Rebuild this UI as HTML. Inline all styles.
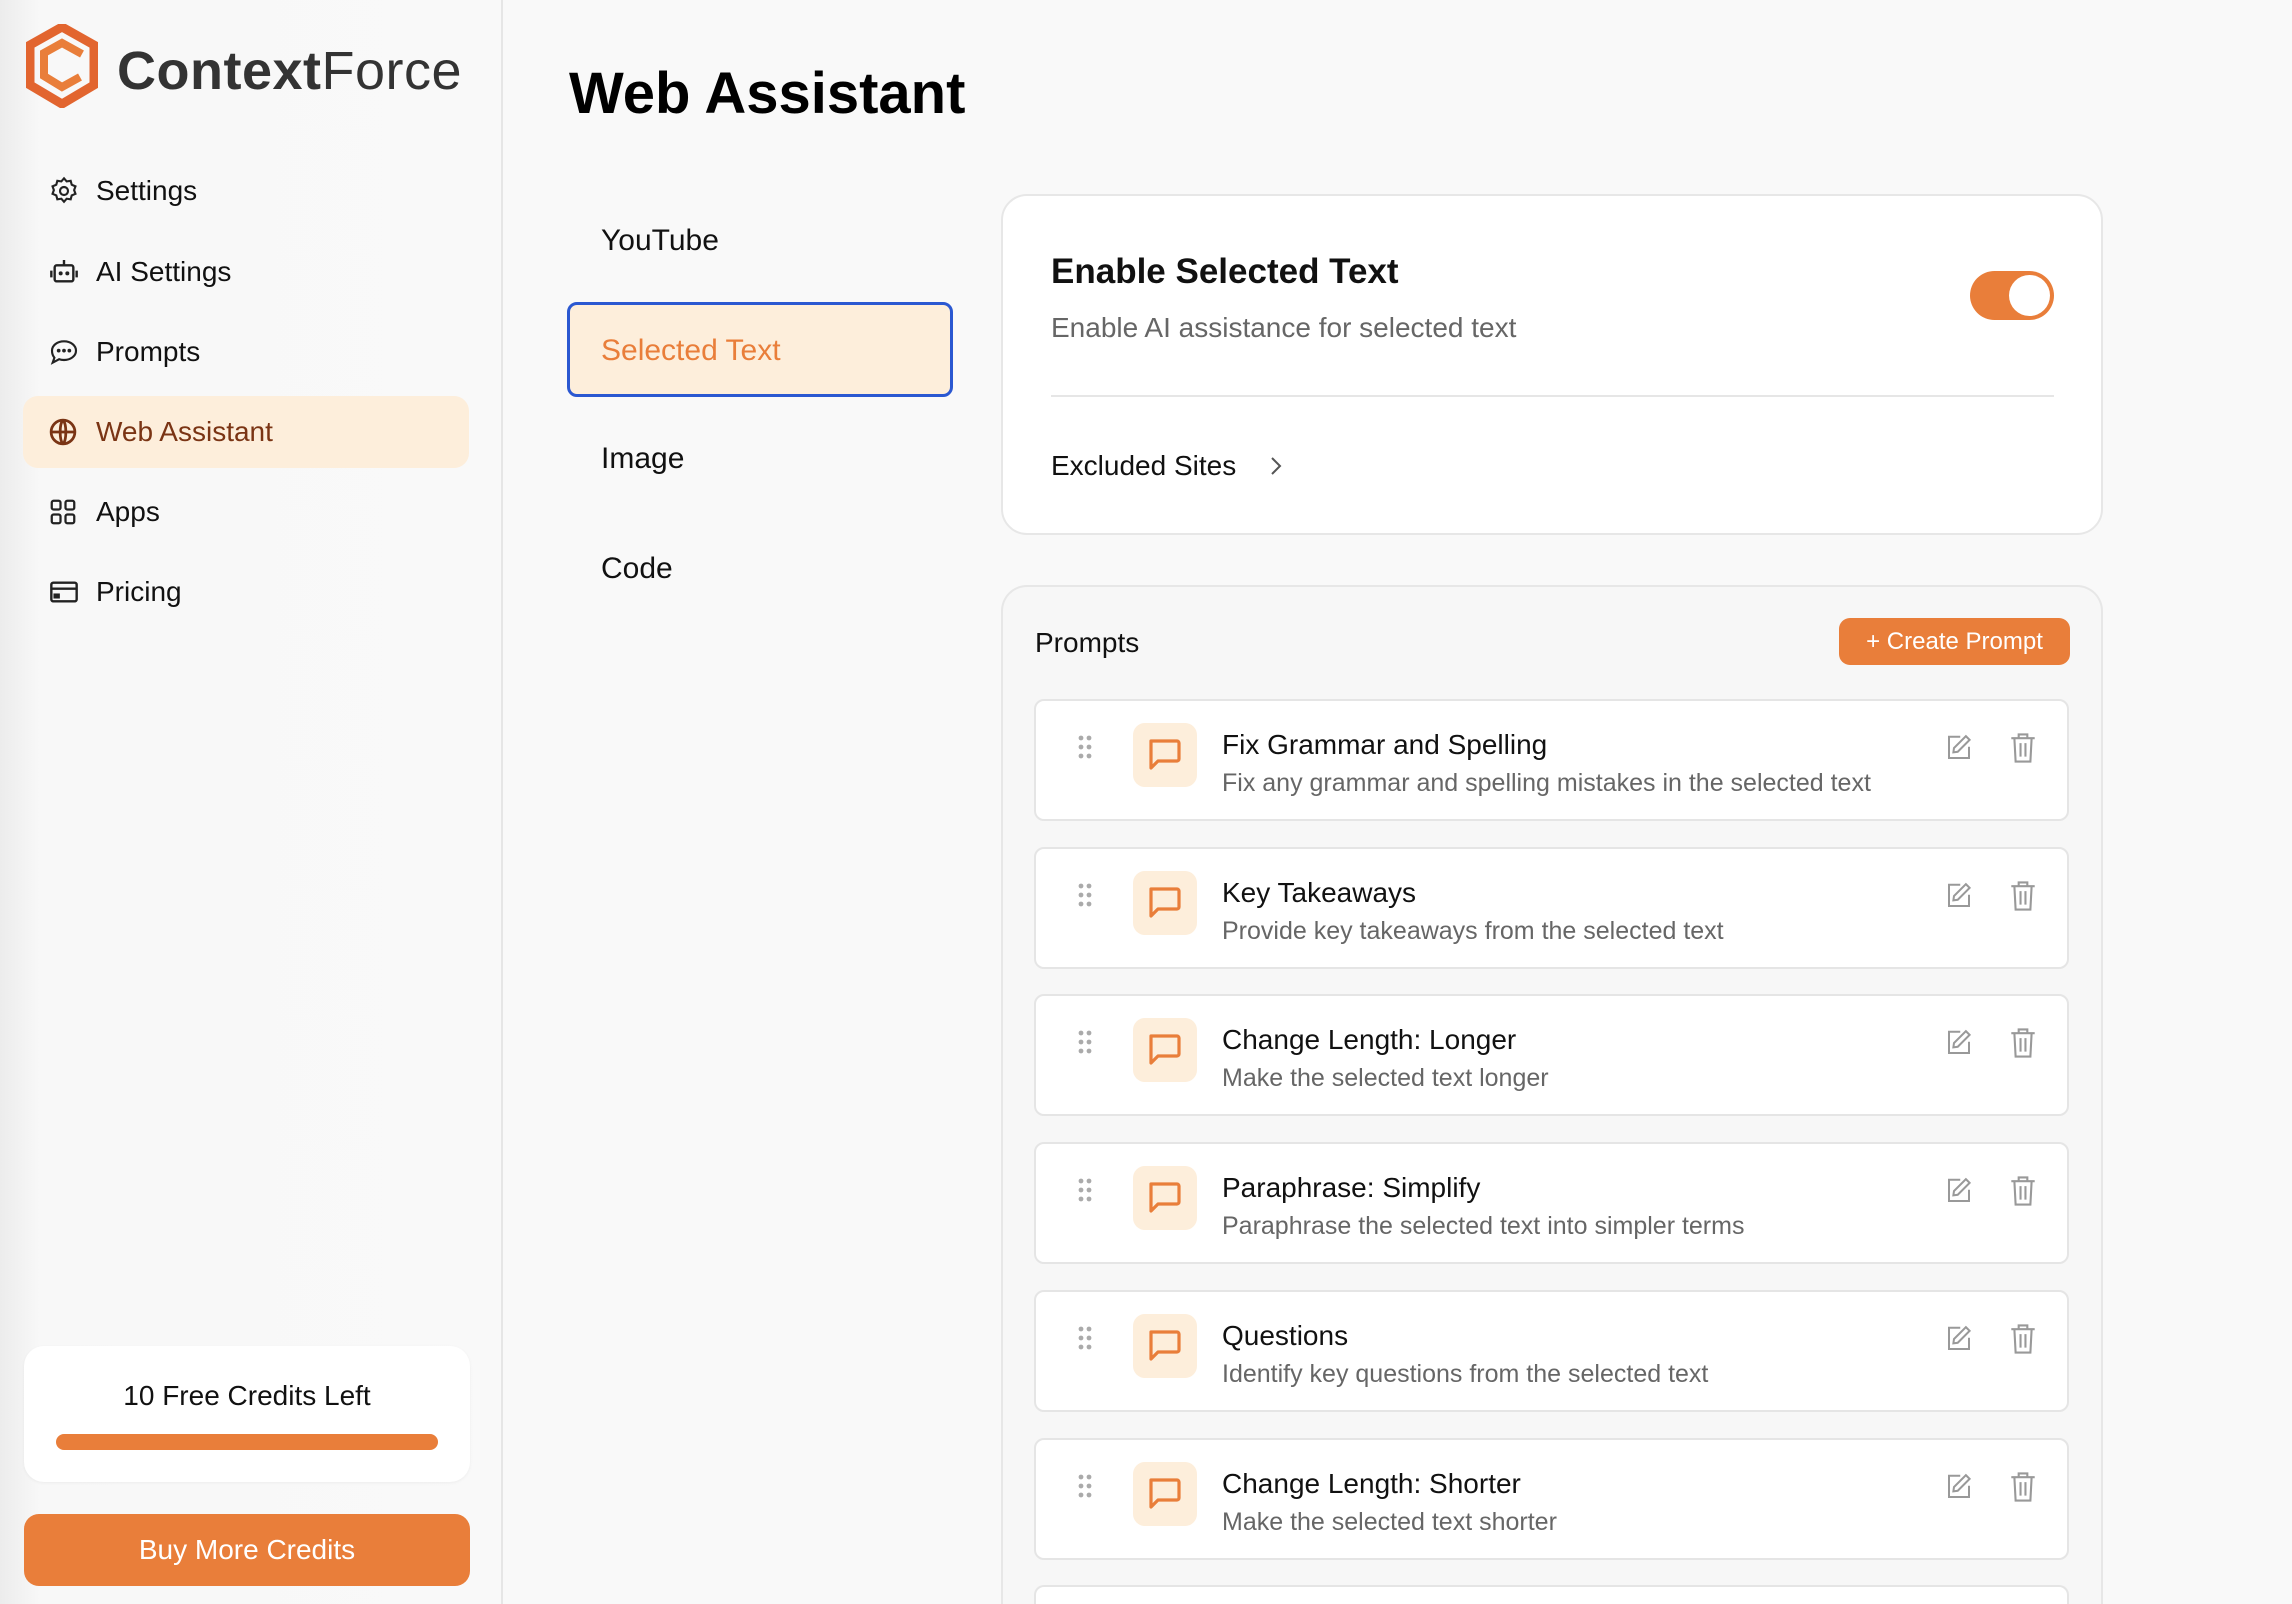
<!DOCTYPE html>
<html><head><meta charset="utf-8"><style>
*{box-sizing:border-box;margin:0;padding:0}
html{width:2292px;height:1604px;overflow:hidden}
body{width:2292px;height:1604px;overflow:hidden;background:#f9f9f9;font-family:"Liberation Sans",sans-serif;color:#111;position:relative}
.abs{position:absolute}
#side{left:0;top:0;width:503px;height:1604px;background:linear-gradient(90deg,#ececec 0,#f8f8f8 40px,#f9f9f9 100%);border-right:2px solid #e6e6e6}
.nav{position:absolute;left:23px;width:446px;height:72px;display:flex;align-items:center;font-size:28px;color:#111}
.nav svg{position:absolute;left:25px;top:50%;transform:translateY(-50%)}
.nav span{position:absolute;left:73px}
.tab{position:absolute;left:601px;font-size:30px;font-weight:500}
.card{position:absolute;background:#fff;border:2px solid #e7e7e7;border-radius:26px}
.item{position:absolute;left:1034px;width:1035px;height:122px;background:#fff;border:2px solid #e5e5e5;border-radius:10px}
.item .dots{position:absolute;left:42px;top:34px}
.item .ib{position:absolute;left:97px;top:22px;width:64px;height:64px;background:#fdeedb;border-radius:12px}
.item .ib svg{position:absolute;left:15px;top:14px}
.item .t{position:absolute;left:186px;top:28px;font-size:28px;font-weight:500;color:#111}
.item .d{position:absolute;left:186px;top:68px;font-size:25px;color:#666}
.item .e{position:absolute;left:908px;top:32px}
.item .x{position:absolute;left:973px;top:31px}
#clip{position:absolute;left:0;top:0;width:2292px;height:1604px;overflow:hidden}
</style></head><body><div id="clip">
<div id="side" class="abs"></div>
<svg class="abs" style="left:26px;top:24px" width="72" height="84" viewBox="0 0 72 84">
<path d="M36 3 L68 21 L68 61 L36 80 L4 61 L4 21 Z" fill="none" stroke="#e2652f" stroke-width="9" stroke-linejoin="miter"/>
<path d="M56 30 L36 19 L18 29 L18 52 L36 63 L54 53" fill="none" stroke="#e97e3a" stroke-width="8"/>
</svg>
<div class="abs" style="left:117px;top:40px;font-size:54px;color:#333;letter-spacing:0.5px"><b>Context</b>Force</div>

<div class="nav" style="top:155px"><svg width="32" height="32" viewBox="0 0 24 24" fill="none" stroke="#222" stroke-width="1.6"><circle cx="12" cy="12" r="3"/><path d="M12 2.5l2 2.3 3-.4.8 2.9 2.8 1.2-1 2.8 1 2.8-2.8 1.2-.8 2.9-3-.4-2 2.3-2-2.3-3 .4-.8-2.9-2.8-1.2 1-2.8-1-2.8 2.8-1.2.8-2.9 3 .4z"/></svg><span>Settings</span></div>
<div class="nav" style="top:236px"><svg width="32" height="32" viewBox="0 0 24 24" fill="none" stroke="#222" stroke-width="1.8"><rect x="5" y="7" width="14" height="12" rx="1.5"/><path d="M12 3v4M2.5 11v5M21.5 11v5"/><circle cx="9.5" cy="13" r=".6" fill="#222"/><circle cx="14.5" cy="13" r=".6" fill="#222"/></svg><span>AI Settings</span></div>
<div class="nav" style="top:316px"><svg width="32" height="32" viewBox="0 0 24 24" fill="none" stroke="#222" stroke-width="1.6"><path d="M12 4c5 0 9 3 9 7s-4 7-9 7c-1.3 0-2.5-.2-3.6-.6L3.5 20l1.3-3.7C3.7 15 3 13.1 3 11c0-4 4-7 9-7z"/><circle cx="8" cy="11" r=".6" fill="#222"/><circle cx="12" cy="11" r=".6" fill="#222"/><circle cx="16" cy="11" r=".6" fill="#222"/></svg><span>Prompts</span></div>
<div class="nav" style="top:396px;background:#fdeedb;border-radius:15px;color:#7a3414"><svg width="30" height="30" viewBox="0 0 24 24" fill="none" stroke="#7a3414" stroke-width="2.2"><circle cx="12" cy="12" r="9.5"/><path d="M2.5 12h19M12 2.5c3 3 3 16 0 19M12 2.5c-3 3-3 16 0 19"/></svg><span>Web Assistant</span></div>
<div class="nav" style="top:476px"><svg width="30" height="30" viewBox="0 0 24 24" fill="none" stroke="#222" stroke-width="1.8"><rect x="3" y="3" width="7" height="7" rx="1.5"/><rect x="14" y="3" width="7" height="7" rx="1.5"/><rect x="3" y="14" width="7" height="7" rx="1.5"/><rect x="14" y="14" width="7" height="7" rx="1.5"/></svg><span>Apps</span></div>
<div class="nav" style="top:556px"><svg width="32" height="32" viewBox="0 0 24 24" fill="none" stroke="#222" stroke-width="1.8"><rect x="2.5" y="5" width="19" height="14" rx="1.5"/><path d="M2.5 9.5h19"/><rect x="5" y="14" width="3" height="2" fill="#222"/></svg><span>Pricing</span></div>

<div class="abs" style="left:24px;top:1346px;width:446px;height:136px;background:#fff;border-radius:20px;box-shadow:0 1px 3px rgba(0,0,0,.05)"></div>
<div class="abs" style="left:24px;top:1380px;width:446px;text-align:center;font-size:28px;font-weight:500">10 Free Credits Left</div>
<div class="abs" style="left:56px;top:1434px;width:382px;height:16px;background:#e97e3a;border-radius:8px"></div>
<div class="abs" style="left:24px;top:1514px;width:446px;height:72px;background:#e97e3a;border-radius:15px;color:#fff;font-size:28px;text-align:center;line-height:72px">Buy More Credits</div>

<div class="abs" style="left:569px;top:60px;font-size:58px;font-weight:bold;color:#000">Web Assistant</div>

<div class="tab" style="top:224px">YouTube</div>
<div class="abs" style="left:567px;top:302px;width:386px;height:95px;background:#fdeedb;border:3px solid #2b58d1;border-radius:10px"></div>
<div class="tab" style="top:334px;color:#e97e3a">Selected Text</div>
<div class="tab" style="top:442px">Image</div>
<div class="tab" style="top:552px">Code</div>

<div class="card" style="left:1001px;top:194px;width:1102px;height:341px"></div>
<div class="abs" style="left:1051px;top:252px;font-size:35px;font-weight:bold">Enable Selected Text</div>
<div class="abs" style="left:1051px;top:312px;font-size:28px;color:#666">Enable AI assistance for selected text</div>
<div class="abs" style="left:1970px;top:271px;width:84px;height:49px;background:#e97e3a;border-radius:25px"><div style="position:absolute;right:4px;top:4px;width:41px;height:41px;border-radius:50%;background:#fff"></div></div>
<div class="abs" style="left:1051px;top:395px;width:1003px;height:2px;background:#e6e6e6"></div>
<div class="abs" style="left:1051px;top:450px;font-size:28px;font-weight:500">Excluded Sites</div>
<svg class="abs" style="left:1266px;top:453px" width="20" height="26" viewBox="0 0 20 26" fill="none" stroke="#555" stroke-width="2"><path d="M6 5l8 8-8 8"/></svg>

<div class="card" style="left:1001px;top:585px;width:1102px;height:1019px;background:#f7f7f7;border-bottom:none;border-radius:26px 26px 0 0"></div>
<div class="abs" style="left:1035px;top:627px;font-size:28px;font-weight:500">Prompts</div>
<div class="abs" style="left:1839px;top:618px;width:231px;height:47px;background:#e97e3a;border-radius:11px;color:#fff;font-size:24px;font-weight:500;line-height:47px;text-align:center">+ Create Prompt</div>

<div id="items"></div>
</div>
<script>
var d=[["Fix Grammar and Spelling","Fix any grammar and spelling mistakes in the selected text"],["Key Takeaways","Provide key takeaways from the selected text"],["Change Length: Longer","Make the selected text longer"],["Paraphrase: Simplify","Paraphrase the selected text into simpler terms"],["Questions","Identify key questions from the selected text"],["Change Length: Shorter","Make the selected text shorter"],["",""]];
var h="";
d.forEach(function(e,i){var y=699+i*147.7;h+='<div class="item" style="top:'+y+'px'+(e[0]?'':';height:19px;border-bottom:none;border-radius:10px 10px 0 0')+'">'+(e[0]?'<svg class="dots" width="14" height="24" viewBox="0 0 14 24" fill="#aaa"><circle cx="3" cy="3" r="2.4"/><circle cx="11" cy="3" r="2.4"/><circle cx="3" cy="12" r="2.4"/><circle cx="11" cy="12" r="2.4"/><circle cx="3" cy="21" r="2.4"/><circle cx="11" cy="21" r="2.4"/></svg><div class="ib"><svg width="34" height="36" viewBox="0 0 34 36" fill="none" stroke="#e97e3a" stroke-width="3.2" stroke-linejoin="round"><path d="M3 4h26a2 2 0 0 1 2 2v16a2 2 0 0 1-2 2H10l-7 7z"/></svg></div><div class="t">'+e[0]+'</div><div class="d">'+e[1]+'</div><svg class="e" width="30" height="30" viewBox="0 0 24 24" fill="none" stroke="#999" stroke-width="1.6"><path d="M13 3H4v17h16v-9"/><path d="M17.5 2.5l3 3L11 15l-3.5.5L8 12z"/></svg><svg class="x" width="28" height="32" viewBox="0 0 22 26" fill="none" stroke="#999" stroke-width="1.7"><path d="M1.5 5h19M7.5 5V2h7v3M4 5l1 19h12l1-19M9 9v11M13 9v11"/></svg>':'')+'</div>';});
document.getElementById("items").innerHTML=h;
</script>
</body></html>
